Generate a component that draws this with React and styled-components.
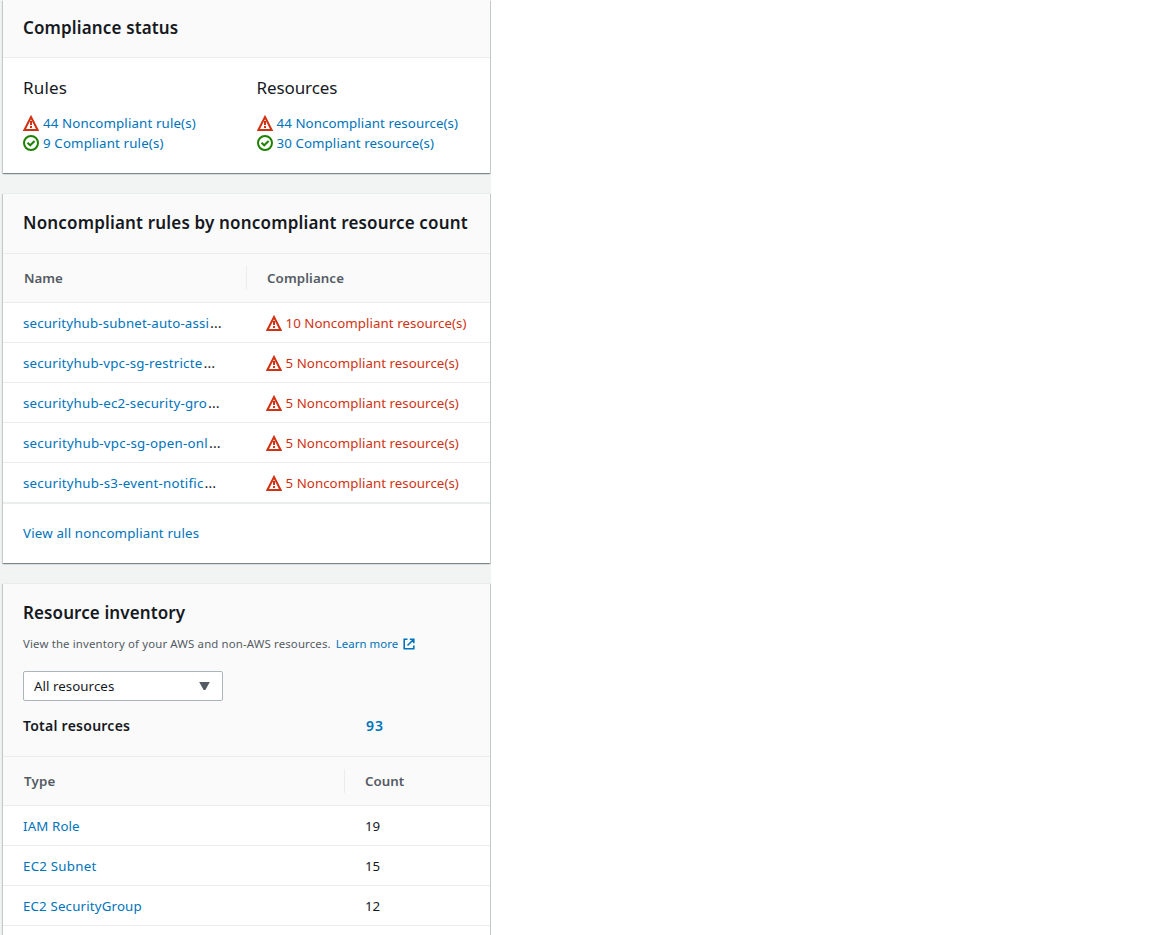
import React from "react";
import styled, { createGlobalStyle } from "styled-components";

const Global = createGlobalStyle`
  *, *::before, *::after { box-sizing: border-box; }
  html, body { margin: 0; background: #fff; overflow: hidden; }
  body {
    color: #16191f;
    font-family: "Noto Sans", "Open Sans", "Liberation Sans", sans-serif;
    font-size: 13.3px;
    line-height: 20px;
  }
`;

const Page = styled.main`
  display: flex;
  flex-direction: column;
  gap: 20px;
  width: 491px;
  height: 935px;
  padding: 0 1px 0 3px;
  overflow: hidden;
  background: #f2f3f3;
`;

const Card = styled.section`
  flex: none;
  height: ${(p) => p.$height}px;
  background: #fff;
  border-top: ${(p) => (p.$cut ? 0 : 1)}px solid #eaeded;
  box-shadow:
    0 1px 1px 0 rgba(0, 28, 36, 0.3),
    1px 1px 1px 0 rgba(0, 28, 36, 0.15),
    -1px 1px 1px 0 rgba(0, 28, 36, 0.15);
`;

const CardHeader = styled.header`
  height: ${(p) => p.$height}px;
  padding: ${(p) => p.$top}px 20px 0;
  background: #fafafa;
  border-bottom: 1px solid #eaeded;
`;

const Title = styled.h2`
  margin: 0;
  font-size: 17px;
  font-weight: 600;
  line-height: 22px;
  letter-spacing: ${(p) => p.$track || 0}px;
  white-space: nowrap;
`;

const Summary = styled.div`
  display: grid;
  grid-template-columns: 233.5px 1fr;
  padding: 19px 20px 0;
`;

const SummaryTitle = styled.h3`
  margin: 0 0 14px;
  font-size: 17px;
  font-weight: 400;
  line-height: 22px;
  letter-spacing: ${(p) => p.$track || 0}px;
`;

const Status = styled.div`
  display: flex;
  align-items: center;
  gap: ${(p) => (p.$error ? 3.5 : 4)}px;
  height: 20px;
  white-space: nowrap;
  color: ${(p) => (p.$error ? "#d13212" : "#0073bb")};
`;

const Label = styled.span`
  letter-spacing: ${(p) => p.$track || 0}px;
`;

const Link = styled.a`
  color: #0073bb;
  letter-spacing: ${(p) => p.$track || 0}px;
`;

const Ellipsis = styled.span`
  margin-left: 1px;
  font-family: "Open Sans", "Noto Sans", sans-serif;
  font-size: 15px;
  line-height: 1;
`;

const HeadRow = styled.div`
  display: grid;
  grid-template-columns: ${(p) => p.$first}px 1fr;
  align-items: center;
  height: 49px;
  background: #fafafa;
  border-bottom: 1px solid #eaeded;
  color: #545b64;
  font-weight: 600;
`;

const HeadCell = styled.div`
  height: 24px;
  line-height: 24px;
  padding-left: ${(p) => (p.$divided ? 20 : 21)}px;
  border-right: ${(p) => (p.$divided ? 0 : 1)}px solid #eaeded;
  letter-spacing: ${(p) => p.$track || 0}px;
`;

const Row = styled.div`
  display: grid;
  grid-template-columns: ${(p) => p.$first}px 1fr;
  align-items: center;
  height: 40px;
  padding-left: 20px;
  border-bottom: 1px solid #eaeded;
  white-space: nowrap;
`;

const CardFooter = styled.footer`
  padding: 19px 20px;
  border-top: 1px solid #eaeded;
`;

const Description = styled.p`
  display: flex;
  align-items: center;
  margin: 11px 0 0;
  font-size: 11.4px;
  line-height: 18px;
  color: #545b64;
  white-space: nowrap;

  a { margin: 0 5px 0 5px; }
`;

const Select = styled.button`
  display: flex;
  align-items: center;
  justify-content: space-between;
  width: 200px;
  height: 30px;
  margin: 18px 0 0;
  padding: 0 12.5px 0 10px;
  border: 1px solid #aab7b8;
  border-radius: 2px;
  background: #fff;
  color: #16191f;
  font: inherit;
`;

const Total = styled.div`
  display: grid;
  grid-template-columns: 343px 1fr;
  margin-top: 15px;
  font-size: 14px;
  font-weight: 600;
`;

const Warning = () => (
  <svg width="16" height="16" viewBox="0 0 16 16" fill="none" stroke="#d13212" strokeWidth="2">
    <path d="M8 2 14.6 15H1.4L8 2Z" />
    <path d="M8 6v4M8 11v2" />
  </svg>
);

const Check = () => (
  <svg width="16" height="16" viewBox="0 0 16 16" fill="none" stroke="#1d8102" strokeWidth="2">
    <circle cx="8" cy="8" r="7" />
    <path d="m4.5 7.8 2.7 2.5L11.6 6" />
  </svg>
);

const External = () => (
  <svg width="12" height="12" viewBox="0 0 12 12" fill="none" stroke="#0073bb" strokeWidth="1.6">
    <path d="M4.5 1.2H1.2v9.6h9.6V7.5M6.8 1.2h4v4M10.8 1.2 4.5 7.5" />
  </svg>
);

const Caret = () => (
  <svg width="11" height="8" viewBox="0 0 11 8" fill="#545b64">
    <path d="M0.2 0h10.6L6.3 8H4.7Z" />
  </svg>
);

const rules = [
  ["securityhub-subnet-auto-assi", "10 Noncompliant resource(s)", 0.15],
  ["securityhub-vpc-sg-restricte", "5 Noncompliant resource(s)", 0.2],
  ["securityhub-ec2-security-gro", "5 Noncompliant resource(s)", 0.2],
  ["securityhub-vpc-sg-open-onl", "5 Noncompliant resource(s)", 0.25],
  ["securityhub-s3-event-notific", "5 Noncompliant resource(s)", 0.24],
];

const inventory = [
  ["IAM Role", 19, 0.12],
  ["EC2 Subnet", 15, 0.24],
  ["EC2 SecurityGroup", 12, 0.16],
];

export default function App() {
  return (
    <>
      <Global />
      <Page>
        <Card $height={173} $cut>
          <CardHeader $height={58} $top={17}>
            <Title $track={0.14}>Compliance status</Title>
          </CardHeader>
          <Summary>
            <div>
              <SummaryTitle $track={0.15}>Rules</SummaryTitle>
              <Status><Warning /><Link $track={0.13}>44 Noncompliant rule(s)</Link></Status>
              <Status><Check /><Link $track={0.14}>9 Compliant rule(s)</Link></Status>
            </div>
            <div>
              <SummaryTitle $track={-0.1}>Resources</SummaryTitle>
              <Status><Warning /><Link $track={0.07}>44 Noncompliant resource(s)</Link></Status>
              <Status><Check /><Link $track={0.09}>30 Compliant resource(s)</Link></Status>
            </div>
          </Summary>
        </Card>

        <Card $height={370}>
          <CardHeader $height={60} $top={18}>
            <Title $track={0.17}>Noncompliant rules by noncompliant resource count</Title>
          </CardHeader>
          <HeadRow $first={244}>
            <HeadCell>Name</HeadCell>
            <HeadCell $divided $track={0.1}>Compliance</HeadCell>
          </HeadRow>
          {rules.map(([name, count, track]) => (
            <Row key={name} $first={243}>
              <span><Link $track={track}>{name}</Link><Ellipsis>…</Ellipsis></span>
              <Status $error><Warning /><Label $track={0.05}>{count}</Label></Status>
            </Row>
          ))}
          <CardFooter><Link $track={0.17}>View all noncompliant rules</Link></CardFooter>
        </Card>

        <Card $height={400}>
          <CardHeader $height={173} $top={18}>
            <Title $track={0.1}>Resource inventory</Title>
            <Description>
              <Label $track={0.15}>View the inventory of your AWS and non-AWS resources.</Label>
              <Link $track={0.05}>Learn more</Link>
              <External />
            </Description>
            <Select><Label $track={0.05}>All resources</Label><Caret /></Select>
            <Total><Label $track={0.25}>Total resources</Label><Link $track={0.9}>93</Link></Total>
          </CardHeader>
          <HeadRow $first={342}>
            <HeadCell $track={0.2}>Type</HeadCell>
            <HeadCell $divided>Count</HeadCell>
          </HeadRow>
          {inventory.map(([type, count, track]) => (
            <Row key={type} $first={342}>
              <Link $track={track}>{type}</Link>
              <span>{count}</span>
            </Row>
          ))}
        </Card>
      </Page>
    </>
  );
}
